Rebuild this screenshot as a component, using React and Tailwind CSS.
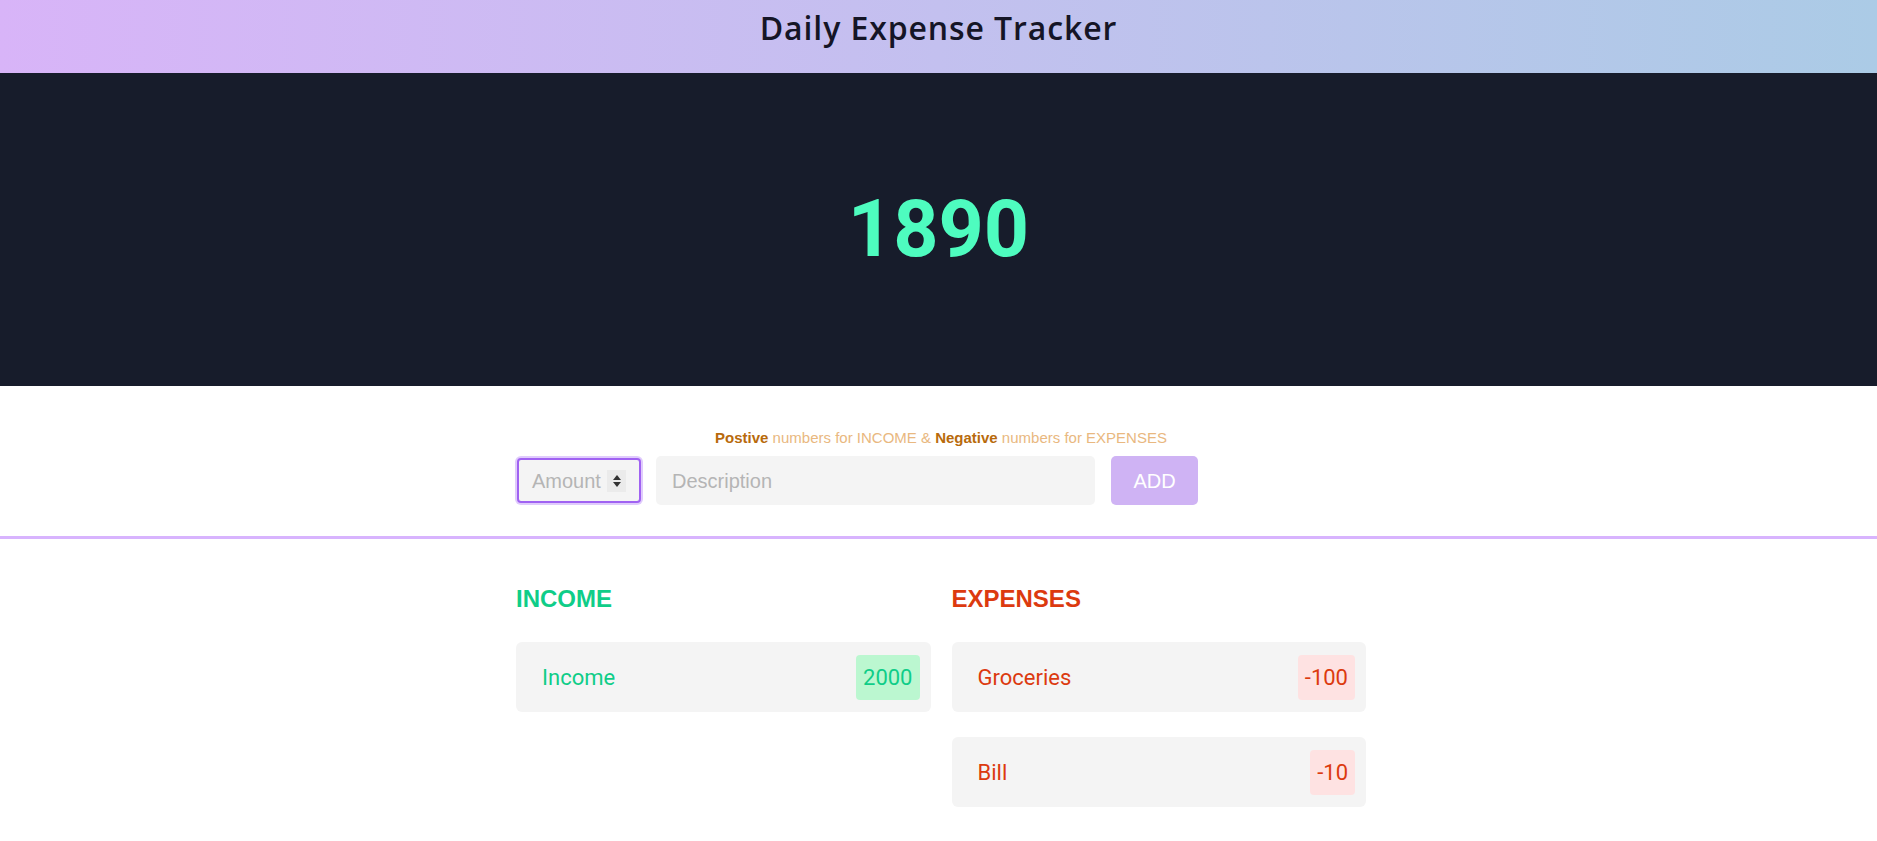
import React from 'react';

const incomes = [{ label: 'Income', amount: '2000' }];
const expenses = [
    { label: 'Groceries', amount: '-100' },
    { label: 'Bill', amount: '-10' },
];

const Row = ({ label, amount, type }) => {
    const green = type === 'income';
    return (
        <div className="h-[70px] bg-[#f4f4f4] rounded-[6px] flex items-center justify-between pl-[26px] pr-[11px]">
            <span className={`text-[22px] font-['Roboto',sans-serif] ${green ? 'text-[#0fcd88]' : 'text-[#dc3a0f]'}`}>{label}</span>
            <span className={`h-[45px] px-[7px] rounded-[4px] flex items-center text-[22px] font-['Roboto',sans-serif] ${green ? 'bg-[#bbf7d0] text-[#0fcd88]' : 'bg-[#fee2e2] text-[#dc3a0f]'}`}>
                {amount}
            </span>
        </div>
    );
};

const App = () => {
    return (
        <div className="min-h-screen bg-white font-['Liberation_Sans',Arial,sans-serif]">
            {/* Header */}
            <header className="h-[73px] pt-[5px] bg-gradient-to-r from-[#d8b4f8] via-[#c3c0ef] to-[#abcbe6] flex justify-center">
                <h1 className="text-[32px] leading-[45px] font-semibold tracking-[0.9px] text-[#151526] font-['Open_Sans',sans-serif]">Daily Expense Tracker</h1>
            </header>

            {/* Balance */}
            <section className="h-[313px] bg-[#171c2b] flex items-center justify-center">
                <span className="text-[79px] font-bold text-[#4efcbf] font-['Roboto',sans-serif] leading-none">1890</span>
            </section>

            {/* Form */}
            <section className="pt-[43px] pb-[31px] border-b-[3px] border-[#d8b4fe]">
                <div className="w-[855px] mx-auto pl-[5px]">
                    <p className="text-center text-[15px] leading-[18px] text-[#e9b880]">
                        <b className="text-[#b86a0c]">Postive</b> numbers for INCOME &amp; <b className="text-[#b86a0c]">Negative</b> numbers for EXPENSES
                    </p>
                    <div className="mt-[9px] flex items-center">
                        <div className="w-[124px] h-[45px] ml-[1px] rounded-[4px] border-2 border-[#a062f2] shadow-[0_0_0_2px_#e0cbfc] bg-[#f4f4f4] flex items-center justify-between pl-[13px] pr-[13px]">
                            <span className="text-[20px] text-[#b5b5b5]">Amount</span>
                            <span className="w-[19px] h-[22px] bg-[#ebebeb] flex flex-col items-center justify-center gap-[2px]">
                                <span className="w-0 h-0 border-l-[4px] border-r-[4px] border-b-[5px] border-transparent border-b-[#333]"></span>
                                <span className="w-0 h-0 border-l-[4px] border-r-[4px] border-t-[5px] border-transparent border-t-[#333]"></span>
                            </span>
                        </div>
                        <div className="ml-[15px] w-[439px] h-[49px] rounded-[5px] bg-[#f4f4f4] flex items-center pl-[16px]">
                            <span className="text-[20px] text-[#b5b5b5]">Description</span>
                        </div>
                        <button className="ml-[16px] w-[87px] h-[49px] rounded-[5px] bg-[#cfb3f4] text-white text-[20px]">ADD</button>
                    </div>
                </div>
            </section>

            {/* Lists */}
            <section className="pt-[44px] pb-10">
                <div className="w-[855px] mx-auto pl-[5px] grid grid-cols-2 gap-x-[21px]">
                    <div>
                        <h2 className="text-[24px] leading-[32px] font-bold text-[#0fcd88] mb-[27px]">INCOME</h2>
                        <div className="flex flex-col gap-[25px]">
                            {incomes.map((item) => (
                                <Row key={item.label} {...item} type="income" />
                            ))}
                        </div>
                    </div>
                    <div>
                        <h2 className="text-[24px] leading-[32px] font-bold text-[#dc3a0f] mb-[27px]">EXPENSES</h2>
                        <div className="flex flex-col gap-[25px]">
                            {expenses.map((item) => (
                                <Row key={item.label} {...item} type="expense" />
                            ))}
                        </div>
                    </div>
                </div>
            </section>
        </div>
    );
};

export default App;
